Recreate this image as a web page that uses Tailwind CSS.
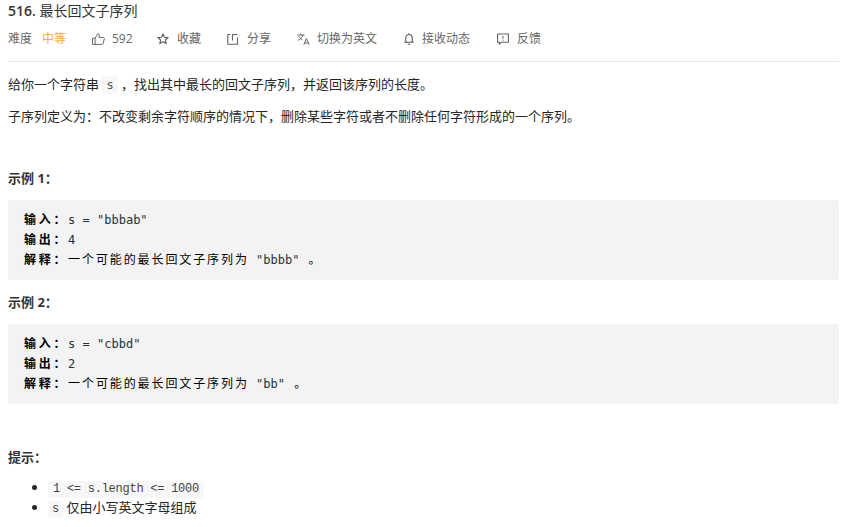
<!DOCTYPE html>
<html lang="zh-CN">
<head>
    <meta charset="UTF-8">
    <meta name="viewport" content="width=device-width, initial-scale=1.0">
    <title>516. 最长回文子序列</title>
    <script src="https://cdn.jsdelivr.net/npm/@tailwindcss/browser@4"></script>
</head>
<body class="bg-white overflow-hidden font-['Open_Sans','Noto_Sans_CJK_SC',sans-serif] text-[#262626]">
    <div class="w-[843px] h-[527px] overflow-hidden pl-2 pr-1">
        <h1 class="pt-[1px] h-[20px] text-[14px] leading-[20px] font-normal text-[#333]"><span class="font-semibold">516.</span> 最长回文子序列</h1>

        <div class="flex items-center h-[18px] mt-[10px] text-[12px] leading-[18px] text-[#666]">
            <span class="w-[34px]">难度</span>
            <span class="w-[50px] text-[#ffa940]">中等</span>
            <svg class="w-[13px] h-[12px] mr-[7px]" viewBox="0 0 13 12" fill="none" stroke="#666" stroke-width="1"><path d="M.5 5.2h2.6v6.2H.5zM3.1 5.2 5.8.7c1.1 0 1.7.8 1.5 1.8L6.9 4.4h4.3c.8 0 1.3.7 1.1 1.4l-1.1 4.5c-.2.7-.7 1.1-1.4 1.1H3.1"/></svg>
            <span class="w-[45px]">592</span>
            <svg class="w-[12px] h-[12px] mr-[8px]" viewBox="0 0 12 12" fill="none" stroke="#555" stroke-width="1.1" stroke-linejoin="round"><path d="M6 .9 7.5 4.2l3.6.4-2.7 2.4.8 3.6L6 8.8l-3.2 1.8.8-3.6L.9 4.6l3.6-.4z"/></svg>
            <span class="w-[50px]">收藏</span>
            <svg class="w-[12px] h-[12px] mr-[8px]" viewBox="0 0 12 12" fill="none" stroke="#666" stroke-width="1.1"><path d="M3.5 1.5H.8v9.7h9.7V4.5M5.5 7.5V1.5h5"/></svg>
            <span class="w-[50px]">分享</span>
            <svg class="w-[13px] h-[12px] mr-[7px]" viewBox="0 0 13 12" fill="none" stroke="#666" stroke-width="1"><path d="M.3 2h7.2M3.8.5V2M6 2C5.4 4.3 3.2 6.4.8 7.4M2 3.6c.8 1.5 1.9 2.6 3.4 3.3M6.8 11.8l2.6-6.2 2.8 6.2M7.6 10h3.7"/></svg>
            <span class="w-[87px]">切换为英文</span>
            <svg class="w-[10px] h-[12px] mr-[8px]" viewBox="0 0 10 12" fill="none" stroke="#555" stroke-width="1.1"><path d="M.3 9.3h9.4M1.8 9.3V4.7a3.2 3.2 0 0 1 6.4 0v4.6M3.8 11.2h2.4M5 .2v1.2"/></svg>
            <span class="w-[75px]">接收动态</span>
            <svg class="w-[12px] h-[12px] mr-[8px]" viewBox="0 0 12 12" fill="none" stroke="#666" stroke-width="1.1"><path d="M.6 1h10.8v8.3H4.2L2.3 11V9.3H.6zM6 3v2.7M6 6.7v1"/></svg>
            <span>反馈</span>
        </div>

        <div class="mt-[13px] w-[831px] border-t border-[#e8e8e8]"></div>

        <p class="mt-[12px] text-[13px] leading-[20px]">给你一个字符串 <code class="inline-block px-[4px] h-[18px] leading-[18px] rounded-[3px] bg-[#f7f7f7] text-[#555] text-[12px] font-['DejaVu_Sans_Mono',monospace]">s</code> ，找出其中最长的回文子序列，并返回该序列的长度。</p>
        <p class="mt-[12px] text-[13px] leading-[20px]">子序列定义为：不改变剩余字符顺序的情况下，删除某些字符或者不删除任何字符形成的一个序列。</p>

        <p class="mt-[42px] text-[13px] leading-[20px] font-bold text-[#333]">示例 1：</p>
        <pre class="mt-[12px] w-[831px] h-[80px] rounded-[3px] bg-[#f3f3f3] px-4 py-[10px] text-[12px] leading-[20px] text-[#263238] font-['DejaVu_Sans_Mono','Noto_Sans_CJK_SC',monospace]"><strong class="tracking-[2.7px] text-black">输入：</strong>s = "bbbab"
<strong class="tracking-[2.7px] text-black">输出：</strong>4
<strong class="tracking-[2.7px] text-black">解释：</strong><span class="tracking-[1.9px] text-black">一个可能的最长回文子序列为</span> "bbbb" <span class="tracking-[1.9px] text-black ml-[2px]">。</span></pre>

        <p class="mt-[12px] text-[13px] leading-[20px] font-bold text-[#333]">示例 2：</p>
        <pre class="mt-[12px] w-[831px] h-[80px] rounded-[3px] bg-[#f3f3f3] px-4 py-[10px] text-[12px] leading-[20px] text-[#263238] font-['DejaVu_Sans_Mono','Noto_Sans_CJK_SC',monospace]"><strong class="tracking-[2.7px] text-black">输入：</strong>s = "cbbd"
<strong class="tracking-[2.7px] text-black">输出：</strong>2
<strong class="tracking-[2.7px] text-black">解释：</strong><span class="tracking-[1.9px] text-black">一个可能的最长回文子序列为</span> "bb" <span class="tracking-[1.9px] text-black ml-[2px]">。</span></pre>

        <p class="mt-[43px] text-[13px] leading-[20px] font-bold text-[#333]">提示：</p>
        <ul class="mt-[11px] ml-[40px] list-disc text-[13px] leading-[19px]">
            <li><code class="inline-block px-[5px] h-[17px] leading-[17px] rounded-[3px] bg-[#f7f7f7] text-[#444] text-[12px] tracking-[-0.25px] font-['Liberation_Mono',monospace]">1 &lt;= s.length &lt;= 1000</code></li>
            <li><code class="inline-block px-[4px] h-[17px] leading-[17px] rounded-[3px] bg-[#f7f7f7] text-[#444] text-[12px] font-['Liberation_Mono',monospace]">s</code> 仅由小写英文字母组成</li>
        </ul>
    </div>
</body>
</html>
